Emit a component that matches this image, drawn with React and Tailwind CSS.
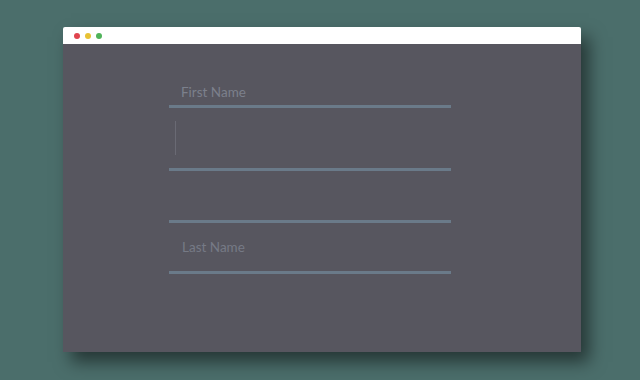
export default function App() {
    return (
        <div className="w-[640px] h-[380px] bg-[#4b6e6b] pt-[27px] pl-[63px] font-['Lato','Open_Sans',sans-serif]">
            <div className="w-[518px] h-[325px] flex flex-col shadow-[8px_10px_16px_rgba(0,0,0,0.5)]">
                <div className="h-[17px] bg-white rounded-t-[2px] flex items-center gap-[5px] pl-[11px]">
                    <span className="w-[6px] h-[6px] rounded-full bg-[#e0444e]" />
                    <span className="w-[6px] h-[6px] rounded-full bg-[#e8c234]" />
                    <span className="w-[6px] h-[6px] rounded-full bg-[#4fb35a]" />
                </div>
                <div className="flex-1 bg-[#57565f] pl-[106px] pt-[34px]">
                    <div className="w-[282px] flex flex-col">
                        <div className="h-[30px] border-b-[3px] border-[#6a7a89] flex items-end pl-[12px] pb-[5px]">
                            <span className="text-[13.5px] leading-[16px] text-[#7c808c]">First Name</span>
                        </div>
                        <div className="h-[63px] border-b-[3px] border-[#6a7a89] pl-[6px] pt-[13px]">
                            <div className="w-px h-[34px] bg-[#6a6a74]" />
                        </div>
                        <div className="h-[52px] border-b-[3px] border-[#6a7a89]" />
                        <div className="h-[51px] border-b-[3px] border-[#6a7a89] flex items-center pl-[13px]">
                            <span className="text-[13.5px] leading-[16px] text-[#767a86]">Last Name</span>
                        </div>
                    </div>
                </div>
            </div>
        </div>
    );
}
